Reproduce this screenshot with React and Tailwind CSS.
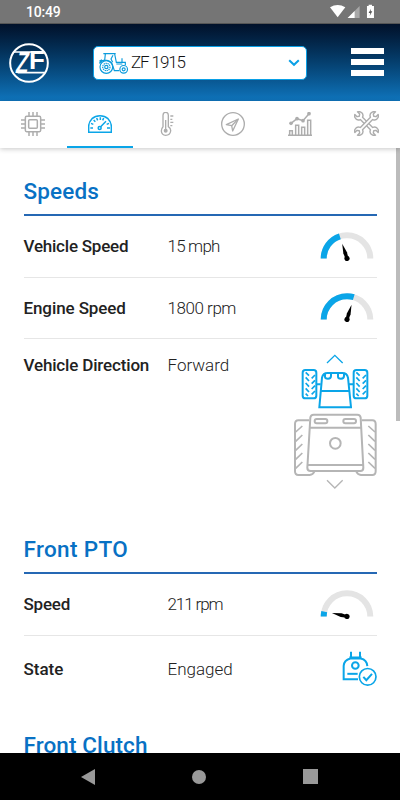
import { useState } from "react";

const SPEEDS = [
  { label: "Vehicle Speed", value: "15 mph", gauge: 0.4, labelTrack: "tracking-[-0.22px]", valueTrack: "tracking-[-0.8px]" },
  { label: "Engine Speed", value: "1800 rpm", gauge: 0.595, labelTrack: "tracking-[-0.1px]", valueTrack: "tracking-[-0.45px]" },
];

/* ---------- header icons ---------- */

function ZfLogo() {
  return (
    <svg viewBox="0 0 120 120" className="h-10 w-10">
      <circle cx="60" cy="60" r="56.500" fill="none" stroke="#fff" strokeWidth="6" />
      <g fill="#fff" fontFamily="Liberation Sans, sans-serif" fontWeight="700">
        <text transform="translate(17 91) skewX(-10) scale(.66 1)" fontSize="92">Z</text>
        <text transform="translate(60 79) scale(1.02 1)" fontSize="76">F</text>
      </g>
      <path d="M15 27H106M26 89H107" stroke="#fff" strokeWidth="5" />
    </svg>
  );
}

function TractorIcon() {
  return (
    <svg viewBox="292 152 93 66" className="h-[22px] w-[31px]" fill="none" stroke="#0a9bdc" strokeWidth="3.5">
      <circle cx="317" cy="197" r="19" />
      <circle cx="317" cy="197" r="11" strokeDasharray="4 2" />
      <circle cx="317" cy="197" r="5" />
      <circle cx="369" cy="204" r="11.5" />
      <circle cx="369" cy="204" r="4.5" />
      <path d="M308 157H345M314 158L312 177M342 158L347 183H374V191M336 183L331 173L337 162M296 186Q305 174 319 177Q335 181 338 198L341 208H356M347 188H365M364 182V171M296 180L304 175" />
    </svg>
  );
}

/* ---------- tab icons ---------- */

const ChipIcon = () => (
  <svg viewBox="63 48 72 72" className="h-6 w-6" fill="none" stroke="currentColor" strokeWidth="4.5">
    <rect x="76" y="61" width="46" height="46" rx="4" />
    <rect x="86" y="71" width="26" height="26" rx="3" />
    <path d="M87 48V60M99 48V60M111 48V60M87 108V120M99 108V120M111 108V120M63 72H75M63 84H75M63 96H75M123 72H135M123 84H135M123 96H135" />
  </svg>
);

const DashIcon = () => (
  <svg viewBox="264 48 72 72" className="h-6 w-6" fill="none" stroke="currentColor" strokeWidth="4.5">
    <path d="M266 109V91Q266 78 276 68Q286 59 300 59Q314 59 324 68Q334 78 334 91V109Z" />
    <circle cx="299" cy="96" r="4.5" />
    <path d="M302 92L318 76M271 96H279M321 96H330M273 82L280 85M281 72L286 77M290 66L293 73M301 64V72M311 66L308 73M327 82L320 85" />
  </svg>
);

const ThermoIcon = () => (
  <svg viewBox="464 48 72 72" className="h-6 w-6" fill="none" stroke="currentColor" strokeWidth="4">
    <path d="M488 92V58Q488 49 496 49Q504 49 504 58V92Q512 97 511 105Q509 118 496 118Q484 117 483 105Q483 97 488 92Z" />
    <path d="M496 72V100M510 60H519M510 70H516M510 79H519M510 89H516" />
    <circle cx="496" cy="104" r="4" fill="currentColor" />
  </svg>
);

const NavIcon = () => (
  <svg viewBox="63 48 72 72" className="h-6 w-6" fill="none" stroke="currentColor" strokeWidth="4">
    <circle cx="99" cy="84" r="34" />
    <path d="M79 86L115 69L98 105L95 89Z" strokeLinejoin="round" />
    <path d="M95 89L114 70" />
  </svg>
);

const ChartIcon = () => (
  <svg viewBox="264 48 72 72" className="h-6 w-6" fill="none" stroke="currentColor" strokeWidth="4.5">
    <path d="M264 118H336M269 118V104H277V118M287 118V88H296V118M305 118V94H314V118M323 118V73H332V118" />
    <path d="M273 82L291 68L309 74L327 53" />
    <g fill="currentColor" stroke="none">
      <circle cx="273" cy="82" r="5.500" />
      <circle cx="291" cy="68" r="5.500" />
      <circle cx="309" cy="74" r="5.500" />
      <circle cx="327" cy="53" r="5.500" />
    </g>
  </svg>
);

const WRENCH =
  "M-5 -23V23C-12 26 -15 33 -13 39Q-11 45 -6 47V37L0 33L6 37V47Q11 45 13 39C15 33 12 26 5 23V-23C12 -26 15 -33 13 -39Q11 -45 6 -47V-37L0 -33L-6 -37V-47Q-11 -45 -13 -39C-15 -33 -12 -26 -5 -23Z";

const ToolsIcon = () => (
  <svg viewBox="-37 -37 74 74" className="h-[25px] w-[25px]" fill="#fff" stroke="currentColor" strokeWidth="4.5" strokeLinejoin="round">
    <path d={WRENCH} transform="rotate(-45) scale(.92)" />
    <path d={WRENCH} transform="rotate(45) scale(.92)" />
  </svg>
);

const TABS = [
  { id: "controller", Icon: ChipIcon },
  { id: "dash", Icon: DashIcon },
  { id: "temperature", Icon: ThermoIcon },
  { id: "location", Icon: NavIcon },
  { id: "statistics", Icon: ChartIcon },
  { id: "service", Icon: ToolsIcon },
];

/* ---------- content drawings ---------- */

function Gauge({ value }) {
  return (
    <svg viewBox="-27 -26.5 54 29" className="mr-[2.500px] h-[29px] w-[54px]" fill="none">
      <path d="M-23.3 0A23.3 23.3 0 0 1 23.3 0" stroke="#e4e4e4" strokeWidth="6" />
      <path d="M-23.3 0A23.3 23.3 0 0 1 23.3 0" stroke="#0aa5e8" strokeWidth="6" pathLength="1" strokeDasharray={`${value} 2`} />
      <g transform={`rotate(${(value - 0.5) * 180})`} fill="#000">
        <path d="M0 -15.5L1.9 -6L1.4 0H-1.4L-1.9 -6Z" />
        <circle r="2.6" />
      </g>
    </svg>
  );
}

function DirectionIcon() {
  return (
    <svg viewBox="42 24 249 414" className="-mt-[2px] h-[138px] w-[83px]" fill="none" strokeWidth="6">
      <g stroke="#0aa5e8">
        <path d="M141 54L164.500 31L188 54" strokeWidth="4" />
        <rect x="68" y="75" width="41" height="85" rx="8" />
        <rect x="221" y="75" width="41" height="85" rx="8" />
        <path d="M118 187L126 98Q129 84 143 84H187Q201 84 204 98L213 187Z" />
        <path d="M123 138H209M110 118H122M207 118H220M135 86V95Q135 101 144 101Q153 101 153 93V86M174 86V95Q174 101 183 101Q192 101 192 93V86" />
        <path d="M77 82L87 92M77 97L87 108M77 114L87 125M77 130L87 141M77 146L84 153M105 90L95 100M105 106L95 116M105 122L95 132M105 138L95 148" strokeWidth="5" />
        <path d="M229 82L239 92M229 97L239 108M229 114L239 125M229 130L239 141M229 146L236 153M258 90L248 100M258 106L248 116M258 122L248 132M258 138L248 148" strokeWidth="5" />
      </g>
      <g stroke="#b5b5b5">
        <path d="M87 226H55Q45 226 45 237V379Q45 390 55 390H89Q99 389 103 380M245 226H277Q287 226 287 237V379Q287 390 277 390H243Q233 389 229 380" />
        <path d="M101 209H232Q241 209 242 218L250 368Q250 378 241 378H92Q82 378 82 368L91 218Q92 209 101 209Z" />
        <path d="M90 248H243M83 360H250" />
        <rect x="104" y="222" width="38" height="13" rx="6" />
        <rect x="190" y="222" width="38" height="13" rx="6" />
        <circle cx="166" cy="295" r="16" />
        <path d="M67 243L47 261M67 270L47 289M67 297L47 316M67 324L47 343M67 351L47 370M265 243L285 261M265 270L285 289M265 297L285 316M265 324L285 343M265 351L285 370" strokeWidth="5" />
        <path d="M141 406L164.500 429L188 406" strokeWidth="4" />
      </g>
    </svg>
  );
}

function PtoIcon() {
  return (
    <svg viewBox="126 213 105 107" className="h-[36px] w-[35px]" fill="none" stroke="#0aa5e8" strokeWidth="6">
      <path d="M153 215V229M180 215V229M148 232H185M174 297H131V257Q132 240 151 235H182Q201 239 202 258" />
      <circle cx="166" cy="256" r="10" />
      <path d="M142 281H173" />
      <circle cx="203" cy="290" r="25" strokeWidth="5" />
      <path d="M190 290L199 300L216 281" />
    </svg>
  );
}

/* ---------- building blocks ---------- */

function SectionTitle({ children, className = "" }) {
  return (
    <h2 className={`shrink-0 border-b-2 border-[#2568b4] text-[22.500px] leading-[26px] font-medium text-[#0871c4] ${className}`}>
      {children}
    </h2>
  );
}

function Row({ label, value, height = "h-[61.500px]", children, last, align = "items-center", labelTrack = "", valueTrack = "" }) {
  return (
    <div className={`flex shrink-0 text-[17px] leading-5 ${align} ${height} ${last ? "" : "border-b-[1.500px] border-[#e6e6e6]"}`}>
      <span className={`w-36 shrink-0 whitespace-nowrap font-medium text-[#222] ${labelTrack}`}>{label}</span>
      <span className={`grow font-light text-[#222] ${valueTrack}`}>{value}</span>
      {children}
    </div>
  );
}

export default function App() {
  const [tab, setTab] = useState("dash");

  return (
    <div className="flex h-[800px] w-[400px] flex-col overflow-hidden bg-white font-['Roboto',sans-serif]">
      {/* Status bar */}
      <div className="flex h-6 shrink-0 items-center border-b border-[#555] bg-[#757575] pl-[26px] pr-[25px] text-white">
        <span className="grow text-[14px] font-medium leading-none tracking-[-0.2px]">10:49</span>
        <svg viewBox="390 12 136 44" className="h-[14.700px] w-[45.300px]">
          <path d="M390 22Q413 8 436 22L413 52Z" fill="#fff" />
          <path d="M479 18V54H443Z" fill="#a8a8a8" />
          <path d="M464 33V54H443Z" fill="#fff" />
          <path d="M506 18V14H516V18H522V54H501V18Z" fill="#fff" />
          <path d="M513 26L506 39H511L509 48L517 34H512Z" fill="#555" />
        </svg>
      </div>

      {/* Header */}
      <header className="flex h-[77px] shrink-0 items-center bg-linear-to-b from-[#01112a] to-[#0f75bd] pl-[9px] pr-4">
        <ZfLogo />
        <button className="ml-[44px] flex h-[34px] w-[214px] items-center rounded-[5px] border border-[#0aa0e6] bg-white pl-[4px] pr-[6px]">
          <TractorIcon />
          <span className="ml-[2px] grow text-left text-[17px] font-light text-[#111] tracking-[-1.1px]">ZF 1915</span>
          <svg viewBox="0 0 12 8" className="h-2 w-3" fill="none" stroke="#0aa0e6" strokeWidth="2">
            <path d="M1.200 1.200L6 5.800L10.800 1.200" />
          </svg>
        </button>
        <div className="mb-[2px] ml-auto flex flex-col gap-[5px]">
          <span className="h-[6px] w-[33px] bg-white" />
          <span className="h-[6px] w-[33px] bg-white" />
          <span className="h-[6px] w-[33px] bg-white" />
        </div>
      </header>

      {/* Tabs */}
      <nav className="z-10 flex h-[47px] shrink-0 bg-white shadow-[0_1px_5px_rgba(0,0,0,0.22)]">
        {TABS.map(({ id, Icon }) => (
          <button key={id} onClick={() => setTab(id)}
            className={`flex flex-1 items-center justify-center border-b-2 ${id === tab ? "border-[#0aa5e8] text-[#0aa5e8]" : "border-transparent text-[#adadad]"}`}>
            <Icon />
          </button>
        ))}
      </nav>

      <main className="flex min-h-0 grow overflow-hidden">
        <div className="flex grow flex-col pl-[23.500px] pr-[19.500px]">
          <SectionTitle className="h-[68px] pt-[29.500px] tracking-[0.15px]">Speeds</SectionTitle>
          {SPEEDS.map(({ gauge, ...row }) => (
            <Row key={row.label} {...row}><Gauge value={gauge} /></Row>
          ))}
          <Row label="Vehicle Direction" value="Forward" height="h-[165px] pt-[16px]" align="items-start" last labelTrack="tracking-[-0.16px]">
            <DirectionIcon />
          </Row>

          <SectionTitle className="h-[70px] pt-[32px] tracking-[0.35px]">Front PTO</SectionTitle>
          <Row label="Speed" value="211 rpm" labelTrack="tracking-[-0.2px]" valueTrack="tracking-[-1.1px]"><Gauge value={0.07} /></Row>
          <Row label="State" value="Engaged" height="h-[67px]" last><PtoIcon /></Row>

          <SectionTitle className="h-[66px] pt-[29px] tracking-[0.1px]">Front Clutch</SectionTitle>
        </div>
        {/* scroll thumb */}
        <div className="h-[273px] w-1 shrink-0 bg-[#bcbcbc]" />
      </main>

      {/* Android navigation */}
      <footer className="flex h-[47px] shrink-0 items-center justify-between bg-black pl-[81px] pr-[82px]">
        <svg viewBox="0 0 14 16" className="h-4 w-3.5" fill="#999"><path d="M0 8L14 0V16Z" /></svg>
        <span className="h-3.5 w-3.5 rounded-full bg-[#999]" />
        <span className="h-[15px] w-[15px] bg-[#999]" />
      </footer>
    </div>
  );
}
